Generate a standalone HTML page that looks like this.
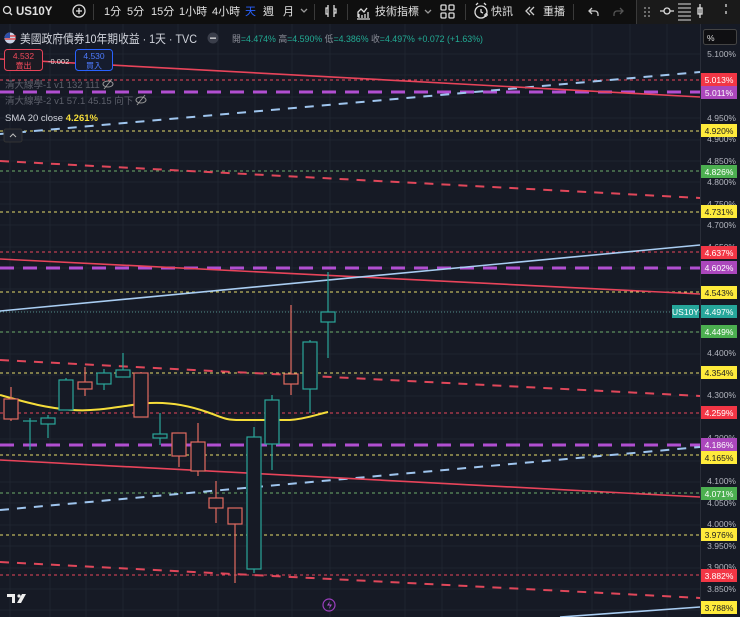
<!DOCTYPE html><html><head><meta charset="utf-8"><style>
body{margin:0;width:740px;height:617px;overflow:hidden;background:#161a25;font-family:"Liberation Sans","Noto Sans CJK TC",sans-serif;}
</style></head><body>
<svg width="740" height="617" xmlns="http://www.w3.org/2000/svg" style="position:absolute;left:0;top:0;font-family:'Liberation Sans','Noto Sans CJK TC',sans-serif">
<rect width="740" height="617" fill="#161a25"/>
<!-- grid -->
<g stroke="#1f2430" stroke-width="1">
<line x1="10" y1="24" x2="10" y2="617"/><line x1="50" y1="24" x2="50" y2="617"/><line x1="86" y1="24" x2="86" y2="617"/><line x1="123" y1="24" x2="123" y2="617"/><line x1="178" y1="24" x2="178" y2="617"/><line x1="218" y1="24" x2="218" y2="617"/><line x1="255" y1="24" x2="255" y2="617"/><line x1="292" y1="24" x2="292" y2="617"/><line x1="330" y1="24" x2="330" y2="617"/><line x1="405" y1="24" x2="405" y2="617"/><line x1="442" y1="24" x2="442" y2="617"/><line x1="517" y1="24" x2="517" y2="617"/><line x1="592" y1="24" x2="592" y2="617"/><line x1="630" y1="24" x2="630" y2="617"/><line x1="667" y1="24" x2="667" y2="617"/>
<line x1="0" y1="54" x2="700" y2="54"/><line x1="0" y1="75" x2="700" y2="75"/><line x1="0" y1="97" x2="700" y2="97"/><line x1="0" y1="118" x2="700" y2="118"/><line x1="0" y1="140" x2="700" y2="140"/><line x1="0" y1="161" x2="700" y2="161"/><line x1="0" y1="182" x2="700" y2="182"/><line x1="0" y1="204" x2="700" y2="204"/><line x1="0" y1="225" x2="700" y2="225"/><line x1="0" y1="247" x2="700" y2="247"/><line x1="0" y1="268" x2="700" y2="268"/><line x1="0" y1="289" x2="700" y2="289"/><line x1="0" y1="311" x2="700" y2="311"/><line x1="0" y1="332" x2="700" y2="332"/><line x1="0" y1="354" x2="700" y2="354"/><line x1="0" y1="375" x2="700" y2="375"/><line x1="0" y1="396" x2="700" y2="396"/><line x1="0" y1="418" x2="700" y2="418"/><line x1="0" y1="439" x2="700" y2="439"/><line x1="0" y1="461" x2="700" y2="461"/><line x1="0" y1="482" x2="700" y2="482"/><line x1="0" y1="503" x2="700" y2="503"/><line x1="0" y1="525" x2="700" y2="525"/><line x1="0" y1="546" x2="700" y2="546"/><line x1="0" y1="568" x2="700" y2="568"/><line x1="0" y1="589" x2="700" y2="589"/><line x1="0" y1="610" x2="700" y2="610"/>
</g>
<!-- horizontal dotted levels -->
<g stroke-width="1" stroke-dasharray="3,3">
<g stroke="#e8475a"><line x1="0" y1="80" x2="700" y2="80"/><line x1="0" y1="252" x2="700" y2="252"/><line x1="0" y1="413" x2="700" y2="413"/><line x1="0" y1="575" x2="700" y2="575"/></g>
<g stroke="#e5dc6a"><line x1="0" y1="131" x2="700" y2="131"/><line x1="0" y1="212" x2="700" y2="212"/><line x1="0" y1="292" x2="700" y2="292"/><line x1="0" y1="373" x2="700" y2="373"/><line x1="0" y1="455" x2="700" y2="455"/><line x1="0" y1="535" x2="700" y2="535"/></g>
<g stroke="#6fae6a"><line x1="0" y1="171" x2="700" y2="171"/><line x1="0" y1="332" x2="700" y2="332"/><line x1="0" y1="493" x2="700" y2="493"/></g>
<line x1="0" y1="312" x2="700" y2="312" stroke="#4f8a86" stroke-dasharray="1,2"/>
</g>
<g stroke="#b14fd1" stroke-width="3" stroke-dasharray="14,9"><line x1="0" y1="92" x2="700" y2="92"/><line x1="0" y1="268" x2="700" y2="268"/><line x1="0" y1="445" x2="700" y2="445"/></g>
<g stroke="#e0475a" stroke-width="2" stroke-dasharray="9,8"><line x1="0" y1="161" x2="700" y2="198"/><line x1="0" y1="360" x2="700" y2="396"/><line x1="0" y1="562" x2="700" y2="598"/></g>
<g stroke="#9fc5ee" stroke-width="2" stroke-dasharray="9,8"><line x1="0" y1="134" x2="700" y2="72"/><line x1="0" y1="510" x2="700" y2="447"/></g>
<g stroke="#e8445a" stroke-width="1.6"><line x1="0" y1="59" x2="700" y2="97"/><line x1="0" y1="259" x2="700" y2="294"/><line x1="0" y1="460" x2="700" y2="497"/></g>
<g stroke="#a9cdf2" stroke-width="1.6"><line x1="0" y1="311" x2="700" y2="245"/><line x1="560" y1="617" x2="700" y2="607"/></g>
<path d="M0 395 C25 402 45 408 73 410 S130 404 150 403 S190 406 207 412 S225 420 240 420 L290 420 C305 419 315 415 328 412" stroke="#f5dd3a" stroke-width="2" fill="none"/>
<g stroke-width="1.2" fill="#161a25">
<g stroke="#e26a5f">
<line x1="11" y1="387" x2="11" y2="421"/><rect x="4" y="399" width="14" height="20"/>
<line x1="85" y1="367" x2="85" y2="396"/><rect x="78" y="382" width="14" height="7"/>
<line x1="141" y1="372" x2="141" y2="417"/><rect x="134" y="373" width="14" height="44"/>
<line x1="179" y1="433" x2="179" y2="467"/><rect x="172" y="433" width="14" height="23"/>
<line x1="198" y1="423" x2="198" y2="476"/><rect x="191" y="442" width="14" height="29"/>
<line x1="216" y1="481" x2="216" y2="523"/><rect x="209" y="498" width="14" height="10"/>
<line x1="235" y1="508" x2="235" y2="583"/><rect x="228" y="508" width="14" height="16"/>
<line x1="291" y1="305" x2="291" y2="395"/><rect x="284" y="374" width="14" height="10"/>
</g>
<g stroke="#2aa69a">
<line x1="30" y1="418" x2="30" y2="450"/><line x1="23" y1="421" x2="37" y2="421"/>
<line x1="48" y1="415" x2="48" y2="438"/><rect x="41" y="418" width="14" height="6"/>
<line x1="66" y1="378" x2="66" y2="410"/><rect x="59" y="380" width="14" height="30"/>
<line x1="104" y1="369" x2="104" y2="390"/><rect x="97" y="373" width="14" height="11"/>
<line x1="123" y1="353" x2="123" y2="377"/><rect x="116" y="370" width="14" height="7"/>
<line x1="160" y1="413" x2="160" y2="445"/><rect x="153" y="434" width="14" height="4"/>
<line x1="254" y1="427" x2="254" y2="573"/><rect x="247" y="437" width="14" height="132"/>
<line x1="272" y1="395" x2="272" y2="470"/><rect x="265" y="400" width="14" height="44"/>
<line x1="310" y1="340" x2="310" y2="413"/><rect x="303" y="342" width="14" height="47"/>
<line x1="328" y1="272" x2="328" y2="358"/><rect x="321" y="312" width="14" height="10"/>
</g></g>
<!-- toolbar -->
<rect x="0" y="0" width="740" height="24" fill="#0f0f0f"/>
<rect x="637" y="0" width="103" height="24" fill="#1a1a1a"/>
<g fill="none" stroke="#ddd" stroke-width="1.3">
<circle cx="7" cy="10" r="3.5"/><line x1="9.5" y1="12.5" x2="12" y2="15"/>
<circle cx="79" cy="11" r="6"/><line x1="76" y1="11" x2="82" y2="11"/><line x1="79" y1="8" x2="79" y2="14"/>
<path d="M301 9 l3 3 l3 -3" stroke="#999"/>
<path d="M328 5v12M328 8h-2v6h2M334 5v12M334 9h2v4h-2"/>
<path d="M357 19h13M358 17v-5l3-3 3 3 3-4M359 18v-4M362 18v-3M365 18v-4M368 18v-6"/>
<path d="M425 10l3 3 3-3" stroke="#999"/>
<rect x="441" y="5" width="5" height="5" rx="1"/><rect x="449" y="5" width="5" height="5" rx="1"/><rect x="441" y="13" width="5" height="5" rx="1"/><rect x="449" y="13" width="5" height="5" rx="1"/>
<circle cx="481" cy="12" r="6"/><path d="M481 9v3l2 1M476 5l2-2M486 5l-2-2"/><path d="M484 15h4M486 13v4"/>
<path d="M530 7l-4 4 4 4M534 7l-4 4 4 4" stroke="#ccc"/>
<path d="M592 8l-3 3 3 3M589 11h6a3 3 0 0 1 3 3v2" stroke="#ccc"/>
<path d="M620 8l3 3-3 3M623 11h-6a3 3 0 0 0-3 3v2" stroke="#555"/>
<path d="M660 11h4M670 11h4M667 11m-3 0a3 3 0 1 0 6 0a3 3 0 1 0 -6 0"/>
<path d="M678 4h13M678 8h13M678 12h13M678 16h13M678 20h13" stroke-width="1"/>
<path d="M700 4v14M698 8h4v6h-4z"/>
<path d="M726 4v3M726 11v3"/>
</g>
<g fill="#888"><circle cx="645" cy="8" r="1"/><circle cx="649" cy="8" r="1"/><circle cx="645" cy="12" r="1"/><circle cx="649" cy="12" r="1"/><circle cx="645" cy="16" r="1"/><circle cx="649" cy="16" r="1"/></g>
<g fill="#3a3a3a"><rect x="93" y="4" width="1" height="16"/><rect x="314" y="4" width="1" height="16"/><rect x="347" y="4" width="1" height="16"/><rect x="465" y="4" width="1" height="16"/><rect x="573" y="4" width="1" height="16"/><rect x="636" y="0" width="1" height="24"/></g>
<g font-size="11" fill="#e0e0e0">
<text x="16" y="15" font-weight="bold" font-size="11.5">US10Y</text>
<text x="104" y="15">1分</text><text x="127" y="15">5分</text><text x="151" y="15">15分</text><text x="179" y="15">1小時</text><text x="212" y="15">4小時</text><text x="245" y="15" fill="#2962ff">天</text><text x="263" y="15">週</text><text x="283" y="15">月</text>
<text x="375" y="15">技術指標</text><text x="491" y="15">快訊</text><text x="543" y="15">重播</text>
</g>
<!-- legend -->
<circle cx="10" cy="38" r="5.5" fill="#c9d3e6"/><path d="M5 36h11M5 39h11" stroke="#d33" stroke-width="1.3"/><path d="M4.5 38a5.5 5.5 0 0 1 5.5 -5.5v5.5z" fill="#2f4fa8"/>
<text x="20" y="43" font-size="12" fill="#d1d4dc" textLength="177" lengthAdjust="spacingAndGlyphs">美國政府債券10年期收益 · 1天 · TVC</text>
<circle cx="213" cy="38" r="5.5" fill="#3a3e4a"/><rect x="210" y="37.5" width="6" height="1.3" fill="#ddd"/>
<text x="232" y="42" font-size="9.3" fill="#8c8f99" textLength="251" lengthAdjust="spacingAndGlyphs">開<tspan fill="#22ab94">=4.474%</tspan> 高<tspan fill="#22ab94">=4.590%</tspan> 低<tspan fill="#22ab94">=4.386%</tspan> 收<tspan fill="#22ab94">=4.497%</tspan> <tspan fill="#22ab94">+0.072 (+1.63%)</tspan></text>
<rect x="4.5" y="49.5" width="38" height="21" rx="3" fill="#1c1a22" stroke="#e8445a"/>
<text x="23.5" y="59" font-size="8.5" fill="#f0495b" text-anchor="middle">4.532</text><text x="23.5" y="68.5" font-size="8" fill="#f0495b" text-anchor="middle">賣出</text>
<text x="48" y="64" font-size="7.5" fill="#ddd">-0.002</text>
<rect x="75.5" y="49.5" width="37" height="21" rx="3" fill="#161c2e" stroke="#2962ff"/>
<text x="94" y="59" font-size="8.5" fill="#4d7bff" text-anchor="middle">4.530</text><text x="94" y="68.5" font-size="8" fill="#4d7bff" text-anchor="middle">買入</text>
<text x="5" y="88" font-size="9.5" fill="#5d606b">清大線學-1 v1 132 111</text>
<text x="5" y="104" font-size="9.5" fill="#5d606b">清大線學-2 v1 57.1 45.15 向下</text>
<g fill="none" stroke="#999" stroke-width="1"><ellipse cx="108" cy="84" rx="5" ry="3"/><line x1="104" y1="89" x2="112" y2="79"/><ellipse cx="141" cy="100" rx="5" ry="3"/><line x1="137" y1="105" x2="145" y2="95"/></g>
<text x="5" y="121" font-size="9.5" fill="#d1d4dc">SMA 20 close <tspan fill="#f5dd3a" font-weight="bold">4.261%</tspan></text>
<rect x="4" y="129" width="18" height="13" rx="2" fill="#1e222d" stroke="#333"/><path d="M10 137l3-3 3 3" stroke="#bbb" fill="none"/>
<!-- axis -->
<rect x="700" y="24" width="40" height="593" fill="#161a25"/>
<line x1="700.5" y1="24" x2="700.5" y2="617" stroke="#2a2e39"/>
<rect x="703.5" y="29.5" width="33" height="15" rx="2" fill="#0f0f12" stroke="#444"/>
<text x="707" y="41" font-size="8.5" fill="#ddd">%</text>
<g font-size="8.5" fill="#b2b5be" text-anchor="end">
<text x="736" y="57">5.100%</text><text x="736" y="121">4.950%</text><text x="736" y="142">4.900%</text><text x="736" y="164">4.850%</text><text x="736" y="185">4.800%</text><text x="736" y="207">4.750%</text><text x="736" y="228">4.700%</text><text x="736" y="250">4.650%</text><text x="736" y="292">4.550%</text><text x="736" y="356">4.400%</text><text x="736" y="398">4.300%</text><text x="736" y="441">4.200%</text><text x="736" y="484">4.100%</text><text x="736" y="506">4.050%</text><text x="736" y="527">4.000%</text><text x="736" y="549">3.950%</text><text x="736" y="570">3.900%</text><text x="736" y="592">3.850%</text>
</g>
<g font-size="8.5" text-anchor="middle">
<rect x="701" y="73" width="36" height="13" fill="#f23645"/><text x="719" y="83" fill="#fff">5.013%</text>
<rect x="701" y="86" width="36" height="13" fill="#ab47bc"/><text x="719" y="96" fill="#fff">5.011%</text>
<rect x="701" y="124" width="36" height="13" fill="#ffeb3b"/><text x="719" y="134" fill="#222">4.920%</text>
<rect x="701" y="165" width="36" height="13" fill="#4caf50"/><text x="719" y="175" fill="#fff">4.826%</text>
<rect x="701" y="205" width="36" height="13" fill="#ffeb3b"/><text x="719" y="215" fill="#222">4.731%</text>
<rect x="701" y="246" width="36" height="13" fill="#f23645"/><text x="719" y="256" fill="#fff">4.637%</text>
<rect x="701" y="261" width="36" height="13" fill="#ab47bc"/><text x="719" y="271" fill="#fff">4.602%</text>
<rect x="701" y="286" width="36" height="13" fill="#ffeb3b"/><text x="719" y="296" fill="#222">4.543%</text>
<rect x="672" y="305" width="27" height="13" fill="#26a69a"/><text x="685.5" y="315" fill="#fff">US10Y</text>
<rect x="701" y="305" width="36" height="13" fill="#26a69a"/><text x="719" y="315" fill="#fff">4.497%</text>
<rect x="701" y="325" width="36" height="13" fill="#4caf50"/><text x="719" y="335" fill="#fff">4.449%</text>
<rect x="701" y="366" width="36" height="13" fill="#ffeb3b"/><text x="719" y="376" fill="#222">4.354%</text>
<rect x="701" y="406" width="36" height="13" fill="#f23645"/><text x="719" y="416" fill="#fff">4.259%</text>
<rect x="701" y="438" width="36" height="13" fill="#ab47bc"/><text x="719" y="448" fill="#fff">4.186%</text>
<rect x="701" y="451" width="36" height="13" fill="#ffeb3b"/><text x="719" y="461" fill="#222">4.165%</text>
<rect x="701" y="487" width="36" height="13" fill="#4caf50"/><text x="719" y="497" fill="#fff">4.071%</text>
<rect x="701" y="528" width="36" height="13" fill="#ffeb3b"/><text x="719" y="538" fill="#222">3.976%</text>
<rect x="701" y="569" width="36" height="13" fill="#f23645"/><text x="719" y="579" fill="#fff">3.882%</text>
<rect x="701" y="601" width="36" height="13" fill="#ffeb3b"/><text x="719" y="611" fill="#222">3.788%</text>
</g>
<path d="M7 594h8v9h-3v-6h-5zM17 603l5-9h4l-5 9z" fill="#eee"/><circle cx="19" cy="596" r="1.6" fill="#eee"/>
<circle cx="329" cy="605" r="6" fill="none" stroke="#9c3fbf" stroke-width="1.2"/><path d="M330 601l-3 4.5h3l-1 3.5 3-4.5h-3z" fill="#b04fd0"/>
</svg>
</body></html>
